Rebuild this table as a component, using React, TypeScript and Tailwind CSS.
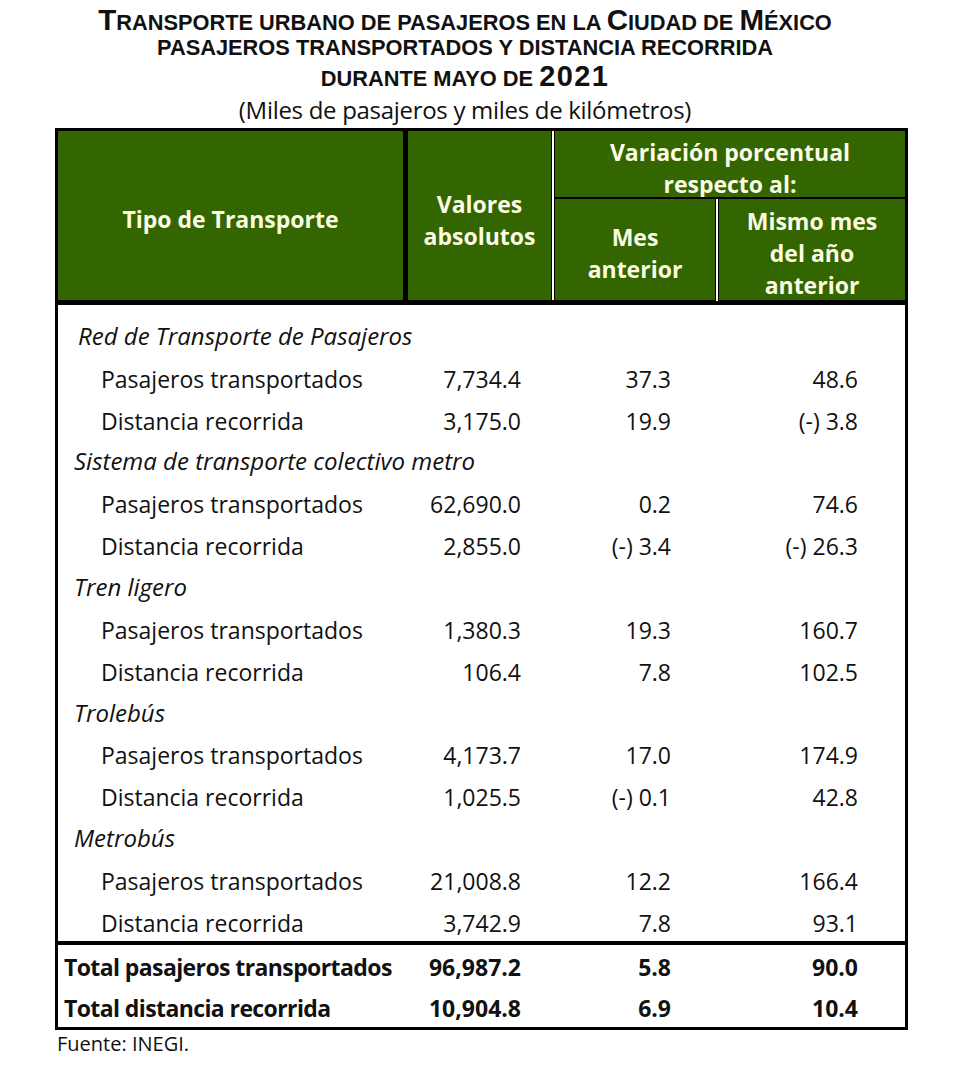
import React from 'react';

interface Row {
  label: string;
  valor?: string;
  mes?: string;
  anual?: string;
  group?: boolean;
}

const rows: Row[] = [
  { label: 'Red de Transporte de Pasajeros', group: true },
  { label: 'Pasajeros transportados', valor: '7,734.4', mes: '37.3', anual: '48.6' },
  { label: 'Distancia recorrida', valor: '3,175.0', mes: '19.9', anual: '(-) 3.8' },
  { label: 'Sistema de transporte colectivo metro', group: true },
  { label: 'Pasajeros transportados', valor: '62,690.0', mes: '0.2', anual: '74.6' },
  { label: 'Distancia recorrida', valor: '2,855.0', mes: '(-) 3.4', anual: '(-) 26.3' },
  { label: 'Tren ligero', group: true },
  { label: 'Pasajeros transportados', valor: '1,380.3', mes: '19.3', anual: '160.7' },
  { label: 'Distancia recorrida', valor: '106.4', mes: '7.8', anual: '102.5' },
  { label: 'Trolebús', group: true },
  { label: 'Pasajeros transportados', valor: '4,173.7', mes: '17.0', anual: '174.9' },
  { label: 'Distancia recorrida', valor: '1,025.5', mes: '(-) 0.1', anual: '42.8' },
  { label: 'Metrobús', group: true },
  { label: 'Pasajeros transportados', valor: '21,008.8', mes: '12.2', anual: '166.4' },
  { label: 'Distancia recorrida', valor: '3,742.9', mes: '7.8', anual: '93.1' },
];

const totals = [
  { label: 'Total pasajeros transportados', valor: '96,987.2', mes: '5.8', anual: '90.0' },
  { label: 'Total distancia recorrida', valor: '10,904.8', mes: '6.9', anual: '10.4' },
];

const body = { fontFamily: '"Open Sans", "Noto Sans", sans-serif' };
const narrow = { fontFamily: '"Liberation Sans Narrow", "Liberation Sans", sans-serif' };

export default function App() {
  return (
    <div className="w-[968px] h-[1070px] bg-white text-[#111]" style={body}>
      {/* titulo */}
      <div className="pr-[38px]">
        <div className="flex flex-col items-center pt-[4px] font-bold text-[#111]" style={narrow}>
          <div className="h-[32px] leading-[32px] text-[21.8px]">
            <span className="text-[29.5px]">T</span>RANSPORTE URBANO DE PASAJEROS EN LA <span className="text-[29.5px]">C</span>IUDAD DE <span className="text-[29.5px]">M</span>ÉXICO
          </div>
          <div className="h-[28px] leading-[28px] text-[21.8px] -mt-[2px]">PASAJEROS TRANSPORTADOS Y DISTANCIA RECORRIDA</div>
          <div className="h-[28px] leading-[28px] text-[21.8px] mt-[3px]">
            DURANTE MAYO DE <span className="text-[29px] leading-[20px] tracking-[1.4px]">2021</span>
          </div>
        </div>
        <div className="text-center text-[24px] leading-[24px] mt-[4.5px] tracking-[-0.3px]" style={body}>
          (Miles de pasajeros y miles de kilómetros)
        </div>
      </div>

      {/* tabla */}
      <div className="ml-[55px] mt-[6.5px] w-[853px] border-[3px] border-black">
        <div className="flex h-[174px] bg-[#336600] text-[#fcfbe4] font-bold text-[23px] leading-[32px] text-center border-b-[5px] border-black">
          <div className="w-[345px] flex items-center justify-center pt-[7px]">Tipo de Transporte</div>
          <div className="w-[5px] bg-black" />
          <div className="w-[143px] flex items-center justify-center pt-[9px]">
            Valores
            <br />
            absolutos
          </div>
          <div className="w-[4px] bg-white border-x border-black" />
          <div className="flex-1 flex flex-col">
            <div className="h-[66px] flex items-center justify-center pt-[8px]">
              Variación porcentual
              <br />
              respecto al:
            </div>
            <div className="h-[4px] bg-white border-y border-black" />
            <div className="flex-1 flex">
              <div className="w-[160px] flex items-center justify-center pt-[5px]">
                Mes
                <br />
                anterior
              </div>
              <div className="w-[4px] bg-white border-x border-black" />
              <div className="flex-1 flex items-center justify-center pt-[6px]">
                Mismo mes
                <br />
                del año
                <br />
                anterior
              </div>
            </div>
          </div>
        </div>

        <div className="pt-[5px] pb-[3px] text-[23px]">
          {rows.map((r, i) =>
            r.group ? (
              <div key={i} className="h-[41.85px] pt-[10px] flex items-center">
                <span className={`italic text-[24px] ${i === 0 ? 'pl-[20px]' : 'pl-[16px]'}`}>{r.label}</span>
              </div>
            ) : (
              <div key={i} className="h-[41.85px] pt-[10px] grid grid-cols-[350px_148px_162px_187px] items-center">
                <span className="pl-[43px]">{r.label}</span>
                <span className="text-right pr-[35px]">{r.valor}</span>
                <span className="text-right pr-[47px]">{r.mes}</span>
                <span className="text-right pr-[47px]">{r.anual}</span>
              </div>
            )
          )}
        </div>

        <div className="border-t-[4px] border-black font-bold text-[23px]">
          {totals.map((t) => (
            <div key={t.label} className="h-[41px] pt-[5px] grid grid-cols-[350px_148px_162px_187px] items-center">
              <span className="pl-[6px] tracking-[-0.6px] whitespace-nowrap">{t.label}</span>
              <span className="text-right pr-[35px]">{t.valor}</span>
              <span className="text-right pr-[47px]">{t.mes}</span>
              <span className="text-right pr-[47px]">{t.anual}</span>
            </div>
          ))}
        </div>
      </div>
      <div className="ml-[57px] text-[20px] leading-[26px] mt-[1px]">Fuente: INEGI.</div>
    </div>
  );
}
